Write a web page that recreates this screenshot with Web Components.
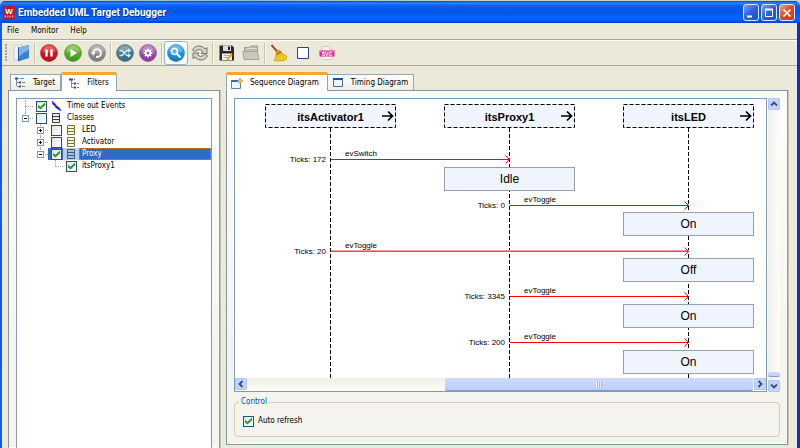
<!DOCTYPE html>
<html lang="en">
<head>
<meta charset="utf-8">
<title>Embedded UML Target Debugger</title>
<style>
html,body{margin:0;height:100%;overflow:hidden}
body{font:8px/12px "DejaVu Sans Condensed","DejaVu Sans",sans-serif;font-stretch:condensed;color:#000;
--face:#ece9d8;--edge:#7f97a3;--well:#7f9db9;--pane:#f4f3ee}
</style>
</head>
<body>
<debugger-window></debugger-window>
<script>
function define(name, html, setup) {
  customElements.define(name, class extends HTMLElement {
    constructor() {
      super();
      this.attachShadow({mode: 'open'}).innerHTML = html;
    }
    connectedCallback() { if (setup) setup(this, this.shadowRoot); }
  });
}

const disc = (c1, c2, c3, glyph) => `<svg width="18" height="18" viewBox="0 0 18 18"><defs><linearGradient id="g" x2="0" y2="1"><stop stop-color="${c1}"/><stop offset=".5" stop-color="${c2}"/><stop offset="1" stop-color="${c3}"/></linearGradient></defs><circle cx="9" cy="9" r="8.5" fill="url(#g)" stroke="${c3}" stroke-opacity=".55"/><path d="M2.5 7.5A6.7 6.7 0 0 1 15.5 7.5Q9 10 2.5 7.5Z" fill="#fff" opacity=".18"/>${glyph}</svg>`;
const icons = {
  open: `<svg width="18" height="18"><path d="M2 2L10 0V15L2 16Z" fill="#eef3f7" stroke="#b9cbd8" stroke-width=".8"/><path d="M6 3.500L17 1V14L6 17.500Z" fill="#3b80cc"/><path d="M6 3.500L17 1V6Q10 9 6 14Z" fill="#7fb2e8"/><path d="M6.500 3.500V17" stroke="#1d5ca8"/></svg>`,
  pause: disc('#e65a5e', '#cf1820', '#a8141a', '<path d="M6.500 5.500V12.500M11.500 5.500V12.500" stroke="#fff" stroke-width="2.400"/>'),
  play: disc('#9acb6a', '#5fae2c', '#3c8c22', '<path d="M6.500 5L13 9L6.500 13Z" fill="#fff"/>'),
  redo: disc('#b9b9b9', '#929292', '#777', '<path d="M8 13H9.200A3.900 3.900 0 1 0 5.200 9" fill="none" stroke="#f4f4f4" stroke-width="2"/><path d="M2.800 8.200H7.800L5.300 11.700Z" fill="#f4f4f4"/>'),
  shuffle: disc('#7f9ca8', '#4f7a8c', '#3d6577', '<path d="M3.500 6.500H6L11 11.500H13M3.500 11.500H6L11 6.500H13" fill="none" stroke="#c9edf5" stroke-width="1.600"/><path d="M12 4.300L15.200 6.500L12 8.700ZM12 9.300L15.200 11.500L12 13.700Z" fill="#c9edf5"/>'),
  gear: disc('#c08cc8', '#9a52ac', '#7c3c92', '<circle cx="9" cy="9" r="2.300" fill="none" stroke="#fff" stroke-width="1.800"/><path d="M9 4.500V6M9 12V13.500M4.500 9H6M12 9H13.500M5.800 5.800L6.900 6.900M11.100 11.100L12.200 12.200M5.800 12.200L6.900 11.100M11.100 6.900L12.200 5.800" stroke="#fff" stroke-width="1.400"/>'),
  find: disc('#6cc4ee', '#2298dc', '#1672ba', '<circle cx="7.500" cy="7.500" r="3" fill="#58b8ec" stroke="#fff" stroke-width="1.600"/><path d="M9.800 9.800L13.500 13.500" stroke="#fff" stroke-width="2"/>'),
  refresh: `<svg width="18" height="18" fill="#d4d3ca" stroke="#77766c"><path d="M1.500 6Q4 1.500 9 2Q12 2.500 14 5L16 3.500V9.500H10L12 7.500Q9 4 5 6.500L3.500 8Z"/><path d="M16.500 12Q14 16.500 9 16Q6 15.500 4 13L2 14.500V9H8L6 10.500Q9 14 13 11.500L14.500 10Z"/></svg>`,
  save: `<svg width="18" height="18"><path d="M1.500 1.500H14L16 3.500V16.500H1.500Z" fill="#292929"/><path d="M5 1.500H13V7H5Z" fill="#dedede"/><path d="M10 2.500H12V6H10Z" fill="#222"/><path d="M4 9.500H14V16H4Z" fill="#f5f5f5"/><path d="M5.500 11.500H12M5.500 13.500H11" stroke="#aaa"/><path d="M9 16L14 10" stroke="#e5a52c" stroke-width="2"/></svg>`,
  load: `<svg width="18" height="18"><path d="M2.500 15V3.500H7L8.500 2H15.500V15Z" fill="#bcbbb1" stroke="#a09f96"/><path d="M5 4.500H15" stroke="#dddcd5"/><path d="M.8 7.500H15.500L17 15.500H2Z" fill="#c9c8bf" stroke="#a5a49b"/></svg>`,
  broom: `<svg width="18" height="18"><path d="M1.500 1L8 8.500" stroke="#a75020" stroke-width="2"/><path d="M5.500 8L9.500 5.500L11 8L6.500 11Z" fill="#d29a20"/><path d="M6 10L11 7.500Q14 11 17 12.500L15.500 16Q10 17.500 4 16.500Q6.500 13.500 6 10Z" fill="#f3d41c" stroke="#c59a12" stroke-width=".8"/><path d="M8 10L7 15.500M10 9.500V15.500M11 9L14 15" stroke="#d1a915" stroke-width=".8"/><path d="M6.500 10.500L11 8" stroke="#cc421c" stroke-width="1.200"/></svg>`,
  square: `<svg width="14" height="14"><path d="M1.500 1.500H12.500V12.500H1.500Z" fill="#fff" stroke="#1d4a88"/></svg>`,
  svg: `<svg width="18" height="18"><path d="M4 2.500H11L14.500 5.500V15.500H4Z" fill="#f6f2f3" stroke="#d8cbd0"/><path d="M11 2.500V6H14.500" fill="#ddd"/><path d="M1.500 6.500H16.500V12.500H1.500Z" fill="#e2278d"/><path d="M1.500 6.500H16.500V8H1.500Z" fill="#f06cb3"/><text x="9" y="11.800" text-anchor="middle" font-family="Liberation Sans" font-weight="700" font-size="5" fill="#fff">SVG</text></svg>`
};

define('tool-button', `<style>
:host{display:flex;width:24px;height:24px}
:host([slim]){width:23px}
button{all:unset;flex:1;box-sizing:border-box;display:grid;place-items:center;border:1px solid transparent;border-radius:3px}
:host([pressed]) button{background:#fdfdfb;border-color:#98b5cf}
svg{display:block}
</style><button type="button"></button>`, (el, root) => {
  const b = root.querySelector('button');
  b.setAttribute('aria-label', el.getAttribute('label'));
  b.innerHTML = icons[el.getAttribute('icon')];
});

define('tool-separator', `<style>:host{display:block;width:4px;height:20px}i{display:block;width:1px;height:100%;margin-left:1px;background:#c5c2b2;border-right:1px solid #f8f7f0}</style><i></i>`);

define('title-bar', `<style>
:host{display:flex;align-items:center;box-sizing:border-box;height:22px;padding:1px 5px 0 3px;gap:3px;border-radius:5px 5px 0 0;
background:linear-gradient(#0842c2 0,#2a83fb 2px,#0a5df0 5px,#0455e4 11px,#0665ff 17px,#0560fa 19px,#0340c8 22px)}
h1{flex:1;margin:0;font:700 10px/18px Roboto,"Noto Sans",sans-serif;color:#fff;text-shadow:1px 1px #0a318f}
.logo{display:block}
button{all:unset;box-sizing:border-box;width:16px;height:17px;display:grid;place-items:center;border:1px solid #dbe6ff;border-radius:3px;background:linear-gradient(135deg,#7ba0f4,#2a5fde 50%,#1c4fd2)}
.close{background:linear-gradient(135deg,#f0a088,#dc4a24 50%,#c43c18)}
.controls{display:flex;gap:2px}
</style>
<svg class="logo" width="12" height="14"><rect width="12" height="14" fill="#b3202c"/><text x="6" y="8" text-anchor="middle" font-family="Liberation Sans" font-weight="700" font-size="8" fill="#fff">W</text><path d="M1.500 10.500H3M4 10.500H5.500M6.500 10.500H8M9 10.500H10.500" stroke="#e58f92" stroke-width="2"/></svg>
<h1>Embedded UML Target Debugger</h1>
<div class="controls">
<button type="button" aria-label="Minimize"><svg width="12" height="12"><path d="M2 9.500H7" stroke="#fff" stroke-width="2"/></svg></button>
<button type="button" aria-label="Maximize"><svg width="12" height="12"><path d="M2 2.500H10" stroke="#fff" stroke-width="2"/><path d="M2.500 3V9.500H9.500V3" fill="none" stroke="#fff"/></svg></button>
<button type="button" class="close" aria-label="Close"><svg width="12" height="12"><path d="M2.500 2.500L9.500 9.500M9.500 2.500L2.500 9.500" stroke="#fff" stroke-width="1.700"/></svg></button>
</div>`);

define('menu-bar', `<style>
:host{display:flex;height:16px;padding:0 5px;gap:12px;border-bottom:1px solid #aca899}
button{all:unset;line-height:16px}
</style><button type="button">File</button><button type="button">Monitor</button><button type="button">Help</button>`);

define('tool-bar', `<style>
:host{display:flex;align-items:center;height:24px;padding:0 2px 0 3px;border-top:1px solid #fff;border-bottom:1px solid #aca899}
.grip{width:4px;height:18px;background:radial-gradient(circle at 1px 1px,#a5a292 1px,transparent 1px) 0 0/5px 3px}
</style><span class="grip"></span><slot></slot>`);

const tabIcons = {
  list: `<svg width="11" height="11"><path d="M1.500 1V9M2 1.500H4M2 5.500H4M2 9.500H4" stroke="#7c8fae" fill="none"/><path d="M0 1.500H3M4 5.500H6M4 9.500H6" stroke="#2f57a0" stroke-width="2"/><path d="M5 1.500H9M7 5.500H10M7 9.500H10" stroke="#7087ae"/></svg>`,
  tree: `<svg width="11" height="11"><path d="M2.500 1V9.500H5M2.500 5.500H5" stroke="#7c8fae" fill="none"/><path d="M0 1.500H4M5 5.500H7M5 9.500H7" stroke="#2f57a0" stroke-width="2"/><path d="M5 1.500H6M8 5.500H10M8 9.500H10" stroke="#4d6fa8"/></svg>`,
  sequence: `<svg width="12" height="11"><path d="M.5 2.500H9.500V10.500H.5Z" fill="#eaf5fd" stroke="#5c86b0"/><path d="M0 3H9" stroke="#2e6cb5" stroke-width="2"/><path d="M9 0L10 2L12 3L10 4L9 6L8 4L6 3L8 2Z" fill="#f4cb4a" stroke="#a8862f" stroke-width=".6"/></svg>`,
  timing: `<svg width="11" height="11"><path d="M.5 1.500H9.500V9.500H.5Z" fill="#eaf5fd" stroke="#46719f"/><path d="M0 2H10" stroke="#214f93" stroke-width="2"/></svg>`
};
define('tab-label', `<style>
:host{display:block}
button{all:unset;box-sizing:border-box;display:flex;align-items:center;height:16px;padding:0 5px;border:1px solid #91a7b4;border-left-width:0;border-bottom:0;background:linear-gradient(#fff,#eeede5)}
:host(:first-child) button{border-left-width:1px;padding-left:4px}
svg{display:block;margin-right:7px}
:host([selected]) button{height:19px;padding:0 8px 0 4px;border-left-width:1px;border-top:3px solid #f6a828;border-radius:2px 2px 0 0;background:#fdfdfc;margin-bottom:-1px;position:relative}
:host([selected]:not(:first-child)) button{padding:0 7px}
</style><button type="button" role="tab"><span></span><slot></slot></button>`, (el, root) => {
  root.querySelector('span').innerHTML = tabIcons[el.getAttribute('icon')];
  root.querySelector('button').setAttribute('aria-selected', el.hasAttribute('selected'));
});

define('tab-pane', `<style>
:host{display:flex;flex-direction:column;min-width:0}
.tabs{display:flex;align-items:flex-end;height:18px}
:host([open-ended]) .tabs{padding-left:2px}
.body{flex:1;min-height:0;display:flex;flex-direction:column;box-sizing:border-box;border:1px solid var(--edge);padding:7px;background:linear-gradient(#fdfdfc,var(--pane) 80%);box-shadow:1px 0 #c8c6b9,inset -1px -1px #fff}
:host([open-ended]) .body{border-bottom:0;padding-bottom:0}
</style><div class="tabs" role="tablist"><slot name="tab"></slot></div><div class="body"><slot></slot></div>`);

define('check-box', `<style>
:host{display:flex;align-items:center}
label{display:flex;align-items:center;gap:4px}
input{appearance:none;box-sizing:border-box;width:11px;height:11px;margin:0;border:1px solid #1c5180;background:linear-gradient(135deg,#e4e4de,#fff);display:block;flex:none}
input:checked::before{content:"";display:block;width:7px;height:7px;margin:1px;background:#21a121;clip-path:polygon(0 35%,35% 62%,100% 0,100% 38%,35% 100%,0 72%)}
</style><label><input type="checkbox"><slot></slot></label>`, (el, root) => {
  root.querySelector('input').checked = el.hasAttribute('checked');
});

const cls = (stroke, fill) => `<svg width="10" height="12"><path d="M1.500 1.500H8.500V10.500H1.500ZM1.500 4.500H8.500M1.500 7.500H8.500" fill="${fill}" stroke="${stroke}"/></svg>`;
const treeIcons = {
  bolt: `<svg width="12" height="12"><path d="M2 1L6 4.500L5.500 5L9.500 8L11 11L5.500 7.500L6 7L3 4.500Z" fill="#1c24e4" stroke="#1c24e4" stroke-width=".6"/></svg>`,
  group: cls('#3c3c3c', '#eee'), item: cls('#77772c', '#fbfbe4'), picked: cls('#35608a', '#a8c0cc')
};
define('tree-row', `<style>
:host{display:flex;height:12px;padding-left:calc(var(--level,0)*15px + 1px)}
.twig{position:relative;width:15px;flex:none;display:grid;place-items:center;align-content:center}
.twig::before{content:"";position:absolute;left:7px;top:0;bottom:0;border-left:1px dotted #aaa}
.twig::after{content:"";position:absolute;left:7px;right:0;top:6px;border-top:1px dotted #aaa}
:host([last]) .twig::before{bottom:50%}
button{all:unset;position:relative;z-index:1;box-sizing:border-box;width:7px;height:7px;border:1px solid #7b98b5;background:linear-gradient(90deg,#000,#000) center/3px 1px no-repeat,linear-gradient(90deg,#000,#000) center/1px 3px no-repeat,#fff}
:host([expander=minus]) button{background:linear-gradient(90deg,#000,#000) center/3px 1px no-repeat,#fff}
:host(:not([expander])) button{display:none}
.content{flex:1;display:flex;align-items:center;padding-left:3px}
:host([selected]) .content{background:#316ac5;color:#fff}
label{display:flex;align-items:center;flex:1;align-self:stretch}
.icon{display:grid;place-items:center;width:16px;margin-left:1px}
.icon svg{display:block}
:host(:not([icon])) .icon{width:1px}
.text{flex:1;padding:0 0 0 3px;line-height:12px}
:host([selected]) .text{outline:1px dotted #c98a3c;outline-offset:-1px}
:host([selected]) .icon{background:#b9cde4}
input{appearance:none;box-sizing:border-box;width:11px;height:11px;margin:0;border:1px solid #1c5180;background:linear-gradient(135deg,#e4e4de,#fff);flex:none}
input:checked::before{content:"";display:block;width:7px;height:7px;margin:1px;background:#21a121;clip-path:polygon(0 35%,35% 62%,100% 0,100% 38%,35% 100%,0 72%)}
</style><span class="twig"><button type="button" aria-label="Expand or collapse"></button></span><span class="content"><label><input type="checkbox"><span class="icon"></span><span class="text"><slot></slot></span></label></span>`, (el, root) => {
  el.style.setProperty('--level', el.getAttribute('level') || 0);
  root.querySelector('input').checked = el.hasAttribute('checked');
  root.querySelector('.icon').innerHTML = treeIcons[el.getAttribute('icon')] || '';
});

define('filter-tree', `<style>:host{display:block;flex:1;border:1px solid var(--well);border-bottom:0;padding-top:1px;background:#fff}</style>
<div><tree-row icon="bolt" checked>Time out Events</tree-row>
<tree-row icon="group" expander="minus" last>Classes</tree-row>
<tree-row level="1" icon="item" expander="plus">LED</tree-row>
<tree-row level="1" icon="item" expander="plus">Activator</tree-row>
<tree-row level="1" icon="picked" expander="minus" checked selected last>Proxy</tree-row>
<tree-row level="2" checked last>itsProxy1</tree-row></div>`);

/* Nodes on the diagram canvas take their place from x / y attributes. */
const place = el => { el.style.left = el.getAttribute('x') + 'px'; el.style.top = el.getAttribute('y') + 'px'; };
define('life-line', `<style>
:host{position:absolute;bottom:0;width:131px}
header{position:relative;height:24px;background:#f0f4ff;font:700 11px/27px "Liberation Sans",Arial,sans-serif;text-align:center}
.frame{position:absolute;inset:0;width:100%;height:100%}
.frame rect{fill:none;stroke:#000;stroke-dasharray:4 2}
.arrow{position:absolute;right:2px;top:6px}
.stem{position:absolute;top:24px;bottom:0;left:65px;width:1px;background:repeating-linear-gradient(#000 0 4px,transparent 4px 6px)}
</style><header><svg class="frame" viewBox="0 0 131 24"><rect x=".5" y=".5" width="130" height="23"/></svg><slot></slot><svg class="arrow" width="12" height="12"><path d="M0 6H10M6 1.500L10.500 6L6 10.500" fill="none" stroke="#000" stroke-width="1.700"/></svg></header><div class="stem"></div>`, place);

define('state-box', `<style>:host{position:absolute;box-sizing:border-box;width:131px;height:24px;border:1px solid #9a9da8;background:#f0f4ff;font:12px/22px "Liberation Sans",Arial,sans-serif;text-align:center}</style><slot></slot>`, place);

define('message-arrow', `<style>
:host{position:absolute;height:1px;background:#f00;font:8px/10px "Liberation Sans",Arial,sans-serif}
:host([soft]){border-top:1px solid #f99;background:#f44}
.name{position:absolute;left:14px;bottom:1px;white-space:nowrap}
.ticks{position:absolute;right:100%;margin-right:5px;top:-4px;white-space:nowrap}
svg{position:absolute;right:0;top:-4px}
</style><span class="ticks"></span><span class="name"><slot></slot></span><svg width="5" height="9"><path d="M.5 .5L4.500 4.500L.5 8.500" fill="none" stroke="#f00"/></svg>`, (el, root) => {
  place(el);
  el.style.width = el.getAttribute('span') + 'px';
  root.querySelector('.ticks').textContent = 'Ticks: ' + el.getAttribute('ticks');
});

define('sequence-diagram', `<style>:host{display:block;position:relative;flex:1;overflow:hidden;background:#fff}</style>
<life-line x="30" y="5">itsActivator1</life-line><life-line x="209" y="5">itsProxy1</life-line><life-line x="388" y="5">itsLED</life-line>
<state-box x="209" y="68">Idle</state-box><state-box x="388" y="113">On</state-box><state-box x="388" y="159">Off</state-box><state-box x="388" y="205">On</state-box><state-box x="388" y="251">On</state-box>
<message-arrow x="96" y="60" span="179" ticks="172">evSwitch</message-arrow>
<message-arrow x="275" y="106" span="179" ticks="0">evToggle</message-arrow>
<message-arrow soft x="96" y="151" span="358" ticks="20">evToggle</message-arrow>
<message-arrow x="275" y="197" span="179" ticks="3345">evToggle</message-arrow>
<message-arrow x="275" y="243" span="179" ticks="200">evToggle</message-arrow>`);

define('scroll-bar', `<style>
:host{display:flex;gap:1px;height:13px;background:linear-gradient(#f0efe8,#fdfdfb)}
:host([vertical]){flex-direction:column;width:12px;height:auto;background:linear-gradient(90deg,#f0efe8,#fdfdfb)}
button{all:unset;box-sizing:border-box;width:12px;height:12px;flex:none;display:grid;place-items:center;border-radius:2px;background:#c3d3fb;box-shadow:inset 0 0 0 1px #b3c6f0}
.track{flex:1;display:flex;flex-direction:inherit;justify-content:flex-end}
.thumb{width:61%;display:grid;place-items:center;box-sizing:border-box;border-radius:2px;background:linear-gradient(#cddafd,#bccffa);border-bottom:1px solid #7f9ed0}
.thumb::after{content:"";width:6px;height:5px;background:repeating-linear-gradient(90deg,#edf2ff 0 1px,#9cb5ee 1px 2px)}
:host([vertical]) .thumb{width:auto;height:5px;margin-bottom:2px}
:host([vertical]) .thumb::after{display:none}
svg{display:block}
:host([vertical]) svg{transform:rotate(90deg)}
</style><button type="button" aria-label="Scroll back"><svg width="8" height="8"><path d="M5.500 1L2.500 4L5.500 7" fill="none" stroke="#31507e" stroke-width="1.800"/></svg></button><div class="track"><div class="thumb"></div></div><button type="button" aria-label="Scroll forward"><svg width="8" height="8"><path d="M2.500 1L5.500 4L2.500 7" fill="none" stroke="#31507e" stroke-width="1.800"/></svg></button>`);

define('diagram-view', `<style>
:host{flex:1;min-height:0;display:flex;gap:1px}
.well{flex:1;display:flex;flex-direction:column;border:1px solid var(--well);min-width:0}
</style><div class="well"><sequence-diagram></sequence-diagram><scroll-bar></scroll-bar></div><scroll-bar vertical></scroll-bar>`);

define('control-group', `<style>
:host{display:block;margin-top:4px}
fieldset{margin:0;min-width:0;height:41px;box-sizing:border-box;border:1px solid #cfccb8;border-radius:4px;padding:7px 8px}
legend{color:#0046d5;padding:0 2px;margin-left:-4px}
</style><fieldset><legend>Control</legend><check-box checked>Auto refresh</check-box></fieldset>`);

define('debugger-window', `<style>
:host{display:flex;flex-direction:column;box-sizing:border-box;min-height:100vh;padding-top:1px;background:linear-gradient(90deg,#b9cfc8,#8fb6d8 30%,#c9d3c4 60%,#c7d4c9) top/100% 8px no-repeat}
.frame{flex:1;display:flex;flex-direction:column;border-left:2px solid #0a5cf5;border-right:3px solid #0832c0;background:var(--face)}
main{flex:1;display:grid;grid-template-columns:212px 1fr;gap:6px;padding:6px 9px 0 6px}
.right{margin-bottom:3px}
</style>
<title-bar></title-bar>
<div class="frame"><menu-bar></menu-bar>
<tool-bar>
<tool-button icon="open" label="Open"></tool-button><tool-separator></tool-separator>
<tool-button icon="pause" label="Pause"></tool-button><tool-button icon="play" label="Run"></tool-button><tool-button icon="redo" label="Restart"></tool-button><tool-separator></tool-separator>
<tool-button slim icon="shuffle" label="Shuffle"></tool-button><tool-button icon="gear" label="Settings"></tool-button><tool-separator></tool-separator>
<tool-button icon="find" label="Find" pressed></tool-button><tool-button slim icon="refresh" label="Refresh"></tool-button><tool-separator></tool-separator>
<tool-button icon="save" label="Save"></tool-button><tool-button icon="load" label="Load"></tool-button><tool-separator></tool-separator>
<tool-button icon="broom" label="Clear"></tool-button><tool-button icon="square" label="Window"></tool-button><tool-button icon="svg" label="Export SVG"></tool-button>
</tool-bar>
<main>
<tab-pane open-ended><tab-label slot="tab" icon="list">Target</tab-label><tab-label slot="tab" icon="tree" selected>Filters</tab-label><filter-tree></filter-tree></tab-pane>
<tab-pane class="right"><tab-label slot="tab" icon="sequence" selected>Sequence Diagram</tab-label><tab-label slot="tab" icon="timing">Timing Diagram</tab-label><diagram-view></diagram-view><control-group></control-group></tab-pane>
</main></div>`);
</script>
</body>
</html>
